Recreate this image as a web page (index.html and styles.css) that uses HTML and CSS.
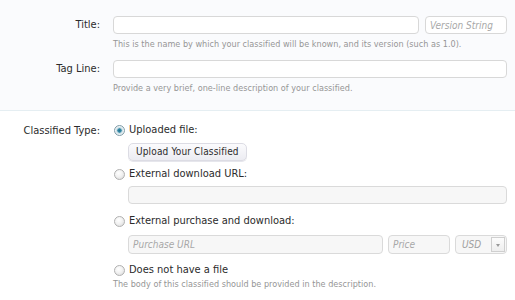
FILE: index.html
```html
<!DOCTYPE html>
<html>
<head>
<meta charset="utf-8">
<link rel="stylesheet" href="styles.css">
</head>
<body>
<div class="section top">
  <div class="row">
    <div class="lbl">Title:</div>
    <div class="ctrl">
      <div class="inline">
        <input class="tb grow" type="text">
        <input class="tb ver" type="text" placeholder="Version String">
      </div>
      <p class="hint">This is the name by which your classified will be known, and its version (such as 1.0).</p>
    </div>
  </div>
  <div class="row r2">
    <div class="lbl">Tag Line:</div>
    <div class="ctrl">
      <input class="tb full" type="text">
      <p class="hint">Provide a very brief, one-line description of your classified.</p>
    </div>
  </div>
</div>
<div class="section bottom">
  <div class="row">
    <div class="lbl">Classified Type:</div>
    <div class="ctrl">
      <div class="opt first"><span class="radio on"></span>Uploaded file:</div>
      <div class="sub"><span class="btn">Upload Your Classified</span></div>
      <div class="opt"><span class="radio"></span>External download URL:</div>
      <div class="sub"><input class="tb full dis" type="text"></div>
      <div class="opt o3"><span class="radio"></span>External purchase and download:</div>
      <div class="sub inline buy">
        <input class="tb grow dis" type="text" placeholder="Purchase URL">
        <input class="tb price dis" type="text" placeholder="Price">
        <div class="tb sel dis"><span class="usd">USD</span><span class="arrow"></span></div>
      </div>
      <div class="opt o4"><span class="radio"></span>Does not have a file</div>
      <p class="hint h2">The body of this classified should be provided in the description.</p>
    </div>
  </div>
</div>
</body>
</html>
```
FILE: styles.css
```css
* { box-sizing: border-box; }
html, body { margin: 0; padding: 0; background: #fff; }
body {
  font-family: "DejaVu Sans Condensed", "DejaVu Sans", sans-serif;
  font-size: 11px;
  color: #2b2b2b;
  width: 515px;
  height: 300px;
  overflow: hidden;
}
.section.top {
  background: #fafbfd;
  padding: 16px 0 16px 0;
  border-bottom: 1px solid #e5eef2;
  height: 111px;
}
.row {
  display: flex;
  align-items: flex-start;
}
.r2 { margin-top: 10px; }
.lbl {
  width: 100px;
  text-align: right;
  line-height: 18px;
  color: #2b2b2b;
  flex: none;
}
.ctrl {
  margin-left: 13px;
  width: 394px;
}
.inline { display: flex; gap: 6px; }
.tb {
  display: block;
  height: 18px;
  border: 1px solid #d8d8d8;
  border-radius: 4px;
  background: #fff;
  font-family: inherit;
  font-size: 10px;
  font-style: italic;
  color: #999;
  padding: 0 4px;
  margin: 0;
  outline: none;
}
.tb::placeholder { color: #a8a8a8; font-style: italic; }
.grow { flex: 1; min-width: 0; }
.ver { width: 82px; flex: none; }
.full { width: 100%; }
.hint {
  margin: 4px 0 0 0;
  font-size: 9px;
  line-height: 12px;
  color: #969696;
  letter-spacing: 0.02px;
}
.section.bottom { padding-top: 11px; }
.opt {
  display: flex;
  align-items: center;
  line-height: 16px;
  height: 16px;
  color: #2b2b2b;
}
.radio {
  width: 11px;
  height: 11px;
  border-radius: 50%;
  border: 1px solid #b0b0b0;
  background: radial-gradient(circle at 40% 35%, #fff 0, #f2f2f2 45%, #d6d6d6 100%);
  margin: 0 4px 0 0;
  flex: none;
}
.radio.on {
  background: radial-gradient(circle at 50% 50%, #21708d 0, #3a8eab 30%, #b8d3dd 38%, #eef3f5 62%, #dde6ea 100%);
  border-color: #7f9ca8;
}
.ctrl .opt { margin-left: 1px; }
.ctrl .opt:not(.first) { margin-top: 5px; }
.o3 { margin-top: 9px !important; }
.o4 { margin-top: 8px !important; }
.sub { margin-left: 15px; margin-top: 5px; }
.bottom .sub .tb.full { margin-top: -1px; }
.dis { background: #f7f7f7; border-color: #dadada; }
.btn {
  display: inline-block;
  height: 18px;
  line-height: 16px;
  padding: 0 7px;
  border: 1px solid #dcdce4;
  border-radius: 5px;
  background: linear-gradient(#fbfbfd, #ececf2);
  font-size: 10px;
  color: #2b2b2b;
  box-shadow: 0 1px 0 #e6e6ec;
  letter-spacing: 0.15px;
}
.buy { margin-top: 6px; gap: 5px; }
.buy .tb { height: 19px; }
.price { width: 62px; flex: none; }
.sel {
  width: 52px;
  flex: none;
  display: flex;
  align-items: center;
  justify-content: space-between;
  padding: 0 1px 0 6px;
}
.usd { font-size: 10px; font-style: italic; color: #a0a0a0; }
.arrow {
  width: 14px;
  height: 15px;
  border: 1px solid #cfcfcf;
  background: linear-gradient(#fcfcfc, #eeeeee);
  position: relative;
}
.arrow::after {
  content: "";
  position: absolute;
  left: 3.5px;
  top: 6px;
  border-left: 2.5px solid transparent;
  border-right: 2.5px solid transparent;
  border-top: 3px solid #999;
}
.h2 { margin-top: 0; margin-left: 0; }
```
